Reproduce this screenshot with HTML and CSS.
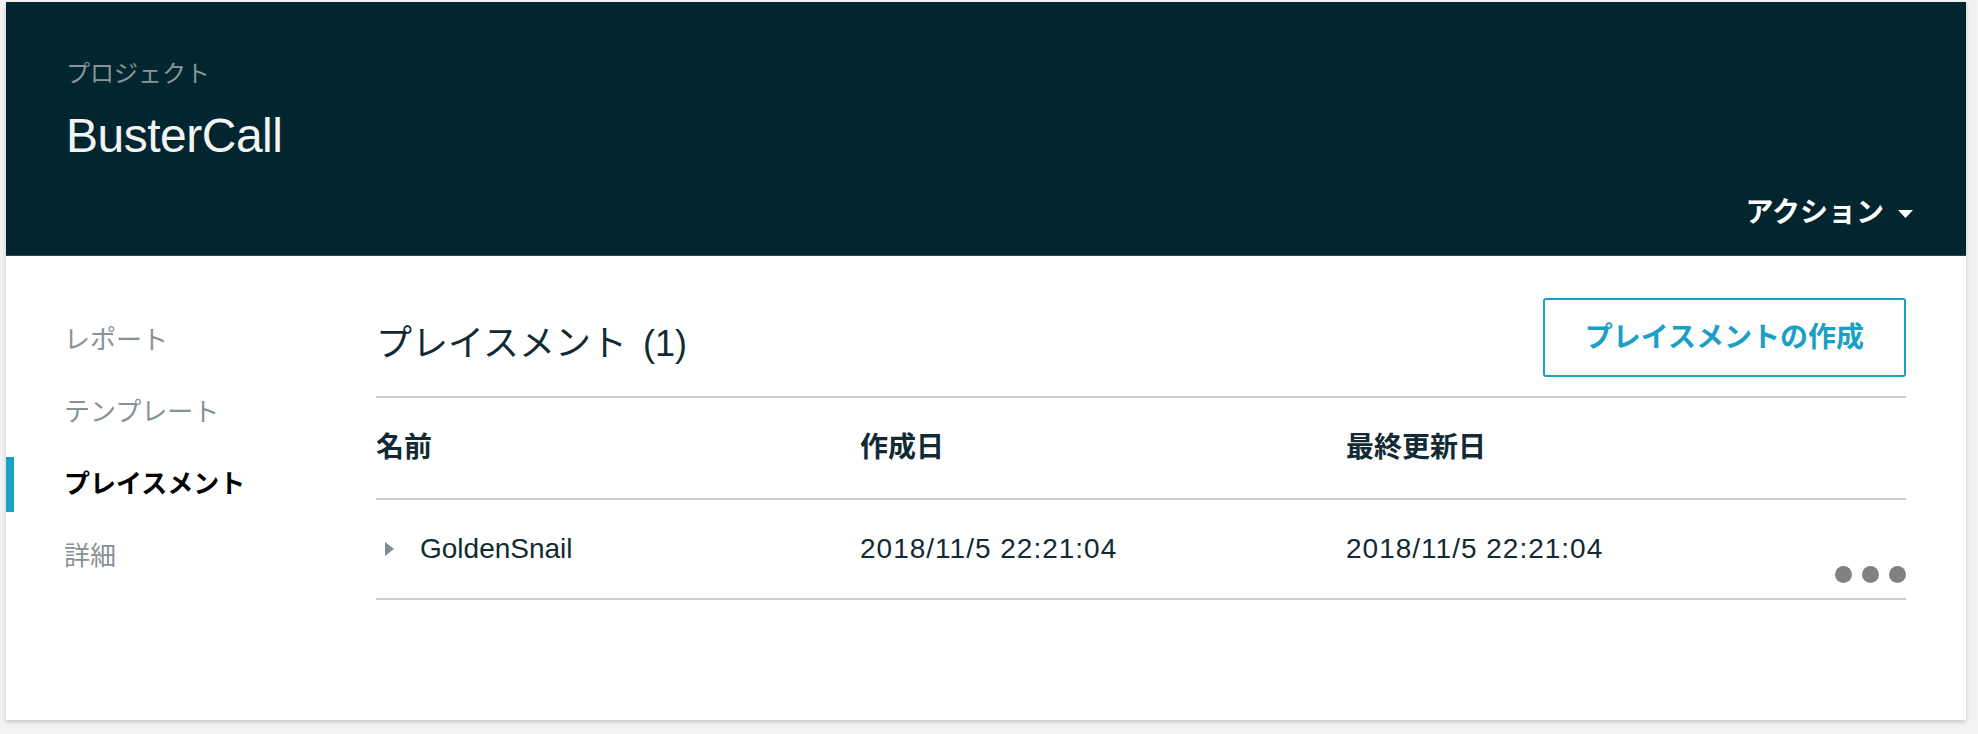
FILE: index.html
```html
<!DOCTYPE html>
<html lang="ja">
<head>
<meta charset="utf-8">
<title>BusterCall</title>
<link rel="stylesheet" href="styles.css">
</head>
<body>
<div class="card">
  <header class="hdr">
    <div class="hdr-label">プロジェクト</div>
    <h1 class="hdr-title">BusterCall</h1>
    <div class="hdr-actions">
      <span class="action-btn">アクション<svg class="caret" width="15" height="8" viewBox="0 0 15 8"><path d="M0 0H15L7.5 8Z" fill="#fff"/></svg></span>
    </div>
  </header>
  <div class="body">
    <nav class="side">
      <a class="side-item">レポート</a>
      <a class="side-item">テンプレート</a>
      <a class="side-item active">プレイスメント</a>
      <a class="side-item">詳細</a>
    </nav>
    <main class="main">
      <div class="main-head">
        <h2 class="main-title">プレイスメント<span class="count">(1)</span></h2>
        <button class="btn">プレイスメントの作成</button>
      </div>
      <div class="tbl">
        <div class="tr th">
          <div class="td">名前</div>
          <div class="td">作成日</div>
          <div class="td">最終更新日</div>
          <div class="td"></div>
        </div>
        <div class="tr">
          <div class="td name"><svg class="expand" width="9" height="14" viewBox="0 0 9 14"><path d="M0 0L9 7L0 14Z" fill="#7f8c8f"/></svg>GoldenSnail</div>
          <div class="td date">2018/11/5 22:21:04</div>
          <div class="td date">2018/11/5 22:21:04</div>
          <div class="td more"><span class="dot"></span><span class="dot"></span><span class="dot"></span></div>
        </div>
      </div>
    </main>
  </div>
</div>
</body>
</html>
```

FILE: styles.css
```css
html, body {
  margin: 0;
}
body {
  background: #f2f2f2;
  padding: 2px 12px 14px 6px;
  font-family: "Liberation Sans", "Noto Sans CJK JP", sans-serif;
}
.card {
  background: #fff;
  height: 718px;
  box-shadow: 0 2px 4px rgba(0, 0, 0, 0.18);
  display: flex;
  flex-direction: column;
}
.hdr {
  background: #02262f;
  height: 254px;
  box-sizing: border-box;
  border-bottom: 1px solid #28464f;
  padding: 57px 53px 0 60px;
  display: flex;
  flex-direction: column;
}
.hdr-label {
  font-size: 24px;
  line-height: 30px;
  color: #8a9599;
}
.hdr-title {
  margin: 19px 0 0;
  font-weight: normal;
  font-size: 48px;
  line-height: 56px;
  letter-spacing: -0.5px;
  color: #f2f4f4;
}
.hdr-actions {
  margin-top: auto;
  padding-bottom: 25px;
  display: flex;
  justify-content: flex-end;
}
.action-btn {
  display: flex;
  align-items: center;
  gap: 14px;
  font-size: 28px;
  font-weight: bold;
  line-height: 34px;
  color: #fff;
}
.caret {
  display: block;
  margin-top: 2px;
}
.body {
  display: flex;
  flex: 1;
}
.side {
  width: 370px;
  flex: none;
  padding-top: 48px;
  box-sizing: border-box;
}
.side-item {
  display: block;
  height: 72px;
  line-height: 72px;
  font-size: 26px;
  color: #879196;
  padding-left: 58px;
}
.side-item.active {
  color: #000;
  font-weight: bold;
  background: linear-gradient(#1a9fc6, #1a9fc6) left center / 8px 55px no-repeat;
}
.main {
  flex: 1;
  padding: 42px 60px 0 0;
}
.main-head {
  display: flex;
  justify-content: space-between;
  align-items: flex-start;
  padding-bottom: 19px;
  border-bottom: 2px solid #cccccc;
}
.main-title {
  margin: 24px 0 0;
  font-size: 36px;
  font-weight: normal;
  line-height: 44px;
  color: #112a33;
}
.count {
  margin-left: 16px;
}
.btn {
  height: 79px;
  box-sizing: border-box;
  padding: 0 40px;
  border: 2px solid #1a9fc6;
  border-radius: 3px;
  background: #fff;
  color: #1a9fc6;
  font-family: "Liberation Sans", "Noto Sans CJK JP", sans-serif;
  font-size: 28px;
  font-weight: bold;
  line-height: 34px;
}
.tr {
  display: grid;
  grid-template-columns: 484px 486px 1fr auto;
  height: 98px;
  border-bottom: 2px solid #cccccc;
  font-size: 28px;
  line-height: 34px;
  color: #112a33;
}
.tr.th {
  height: 100px;
  font-weight: bold;
}
.td {
  display: flex;
  align-items: center;
}
.name .expand {
  display: block;
  margin: 0 26px 0 9px;
}
.date {
  letter-spacing: 1px;
}
.more {
  align-items: flex-end;
  gap: 10px;
  padding-bottom: 15px;
}
.dot {
  width: 17px;
  height: 17px;
  border-radius: 50%;
  background: #818181;
}
```
